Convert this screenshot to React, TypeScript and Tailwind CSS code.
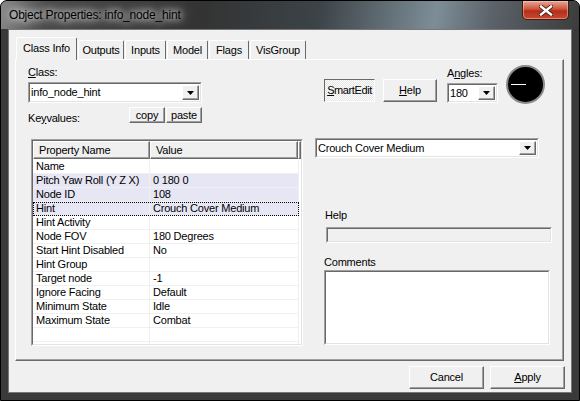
import React from "react";

type Row = { name: string; value: string; hl?: boolean; focus?: boolean };

const rows: Row[] = [
  { name: "Name", value: "" },
  { name: "Pitch Yaw Roll (Y Z X)", value: "0 180 0", hl: true },
  { name: "Node ID", value: "108", hl: true },
  { name: "Hint", value: "Crouch Cover Medium", hl: true, focus: true },
  { name: "Hint Activity", value: "" },
  { name: "Node FOV", value: "180 Degrees" },
  { name: "Start Hint Disabled", value: "No" },
  { name: "Hint Group", value: "" },
  { name: "Target node", value: "-1" },
  { name: "Ignore Facing", value: "Default" },
  { name: "Minimum State", value: "Idle" },
  { name: "Maximum State", value: "Combat" },
  { name: "", value: "" },
  { name: "", value: "" },
];

const tabs = [
  { label: "Outputs", w: "w-[46px]" },
  { label: "Inputs", w: "w-[41px]" },
  { label: "Model", w: "w-[41px]" },
  { label: "Flags", w: "w-[40px]" },
  { label: "VisGroup", w: "w-[56px]" },
];

// classic win32 3d edges
const raised =
  "border border-t-white border-l-white border-r-[#696969] border-b-[#696969] bg-[#f0f0f0] shadow-[inset_-1px_-1px_0_#a0a0a0]";
const sunkenOuter = "border border-t-[#a0a0a0] border-l-[#a0a0a0] border-r-white border-b-white";
const sunkenInner = "border border-t-[#696969] border-l-[#696969] border-r-[#e3e3e3] border-b-[#e3e3e3]";

function DropButton() {
  return (
    <div className={`w-[17px] h-full flex items-center justify-center ${raised}`}>
      <svg width="7" height="4" viewBox="0 0 7 4">
        <path d="M0 0h7L3.5 4z" fill="#000" />
      </svg>
    </div>
  );
}

function Combo({ text, className }: { text: string; className: string }) {
  return (
    <div className={`${className} ${sunkenOuter}`}>
      <div className={`flex h-full bg-white ${sunkenInner}`}>
        <span className="flex-1 pl-[1px] flex items-center whitespace-nowrap">{text}</span>
        <div className="p-[1px] h-full">
          <DropButton />
        </div>
      </div>
    </div>
  );
}

function Angle() {
  return (
    <div className="w-[39px] h-[39px] rounded-full bg-black border-2 border-[#8a8a8a] flex items-center">
      <div className="ml-[3px] w-[15px] h-[1px] bg-white" />
    </div>
  );
}

function CloseButton() {
  return (
    <div className="mr-[10px] self-start w-[47px] h-[19px] rounded-b-[5px] border border-[#4a1a12] border-t-0 bg-[linear-gradient(#e9a894,#d0533c_45%,#b2301c_55%,#c8482e)] flex items-center justify-center shadow-[inset_0_0_0_1px_rgba(255,220,210,0.45)]">
      <svg width="14" height="11" viewBox="0 0 14 11">
        <path d="M2 1.5l10 8M12 1.5l-10 8" stroke="#4a1c14" strokeWidth="4.2" strokeLinecap="square" />
        <path d="M2 1.5l10 8M12 1.5l-10 8" stroke="#fff" strokeWidth="2.4" strokeLinecap="square" />
      </svg>
    </div>
  );
}

export default function App() {
  return (
    <div className="w-[580px] h-[401px] bg-[#3a3a3a] border border-black rounded-t-[7px] overflow-hidden font-['Liberation_Sans',Arial,sans-serif] text-[11px] leading-[13px] tracking-[-0.2px] text-black">
      {/* title bar */}
      <div className="h-[28px] flex items-center justify-between bg-[linear-gradient(100deg,#8a8a8a_0%,#4a4a4a_8%,#333_35%,#3c4448_55%,#7d8d97_75%,#5a6168_85%,#3c3c3c_100%)]">
        <span className="ml-[8px] text-[12px] leading-[14px] [text-shadow:0_0_6px_#ddd,0_0_10px_#ccc,0_0_14px_#bbb]">
          Object Properties: info_node_hint
        </span>
        <CloseButton />
      </div>

      {/* client area */}
      <div className="mx-[7px] h-[364px] bg-[#f0f0f0] border border-[#777] flex flex-col">
        {/* tabs */}
        <div className="flex items-end h-[22px] mt-[7px] ml-[7px]">
          <div className="relative z-10 h-[23px] w-[61px] -mb-[1px] bg-[#f0f0f0] border border-b-0 border-t-white border-l-white border-r-[#696969] rounded-t-[2px] flex items-center justify-center pb-[2px]">
            Class Info
          </div>
          {tabs.map((t) => (
            <div
              key={t.label}
              className={`${t.w} h-[19px] bg-[#f0f0f0] border border-b-0 border-t-white border-l-white border-r-[#696969] rounded-t-[2px] flex items-center justify-center ml-[1px] first:ml-0`}
            >
              {t.label}
            </div>
          ))}
        </div>

        {/* tab panel */}
        <div className="ml-[6px] w-[549px] h-[302px] border border-t-white border-l-white border-r-[#696969] border-b-[#696969] shadow-[inset_-1px_-1px_0_#a0a0a0] flex flex-col">
          <div className="flex h-[78px]">
            <div className="ml-[12px] mt-[6px] w-[174px] flex flex-col">
              <span>
                <u>C</u>lass:
              </span>
              <Combo text="info_node_hint" className="mt-[3px] h-[21px] w-[174px]" />
              <div className="mt-[4px] h-[16px] flex items-end">
                <span className="w-[101px] -mb-[2px]">
                  Ke<u>y</u>values:
                </span>
                <div className={`w-[36px] h-[16px] flex items-center justify-center ${raised}`}>copy</div>
                <div className={`ml-[1px] w-[36px] h-[16px] flex items-center justify-center ${raised}`}>paste</div>
              </div>
            </div>

            <div className="ml-[122px] mt-[19px] w-[51px] h-[23px] border border-t-[#696969] border-l-[#696969] border-r-white border-b-white bg-[repeating-conic-gradient(#fff_0_25%,#e4e4e4_0_50%)] bg-[length:2px_2px] flex items-center justify-center tracking-[-0.4px]">
              <u>S</u>martEdit
            </div>
            <div className={`ml-[8px] mt-[19px] w-[54px] h-[23px] flex items-center justify-center ${raised}`}>
              <u>H</u>elp
            </div>
            <div className="ml-[10px] mt-[7px] flex flex-col">
              <span>
                A<u>n</u>gles:
              </span>
              <Combo text="180" className="mt-[3px] h-[20px] w-[51px]" />
            </div>
            <div className="ml-[8px] mt-[5px]">
              <Angle />
            </div>
          </div>

          <div className="flex">
            {/* keyvalue list */}
            <div className={`ml-[15px] mt-[1px] w-[272px] h-[207px] ${sunkenOuter}`}>
              <div className={`h-full bg-white overflow-hidden ${sunkenInner}`}>
                <div className="flex h-[18px]">
                  <div className={`w-[117px] pl-[5px] flex items-center ${raised}`}>Property Name</div>
                  <div className={`w-[148px] pl-[5px] flex items-center ${raised}`}>Value</div>
                  <div className={`flex-1 ${raised}`} />
                </div>
                <div className="pt-[1px]">
                  {rows.map((r, i) => (
                    <div
                      key={i}
                      className={`flex h-[14px] w-[266px] ${r.hl ? "bg-[#e6e6f5]" : "bg-white"} ${
                        r.focus ? "outline-1 outline-dotted outline-black -outline-offset-1" : ""
                      }`}
                    >
                      <div className="w-[117px] pl-[3px] border-r border-b border-[#f0f0f0] whitespace-nowrap flex items-center">
                        {r.name}
                      </div>
                      <div className="w-[149px] pl-[3px] border-r border-b border-[#f0f0f0] whitespace-nowrap flex items-center">
                        {r.value}
                      </div>
                    </div>
                  ))}
                </div>
              </div>
            </div>

            {/* smartedit side */}
            <div className="ml-[12px] flex flex-col">
              <Combo text="Crouch Cover Medium" className="h-[20px] w-[224px]" />
              <span className="mt-[51px] ml-[10px]">Help</span>
              <div className={`mt-[5px] ml-[11px] w-[226px] h-[16px] ${sunkenOuter}`}>
                <div className={`h-full bg-[#f0f0f0] ${sunkenInner}`} />
              </div>
              <span className="mt-[13px] ml-[9px]">Comments</span>
              <div className={`mt-[1px] ml-[9px] w-[226px] h-[75px] ${sunkenOuter}`}>
                <div className={`h-full bg-white ${sunkenInner}`} />
              </div>
            </div>
          </div>
        </div>

        {/* dialog buttons */}
        <div className="flex justify-end mt-[5px] mr-[6px]">
          <div className={`w-[75px] h-[23px] flex items-center justify-center ${raised}`}>Cancel</div>
          <div className={`ml-[6px] w-[75px] h-[23px] flex items-center justify-center ${raised}`}>
            <u>A</u>pply
          </div>
        </div>
      </div>
    </div>
  );
}
